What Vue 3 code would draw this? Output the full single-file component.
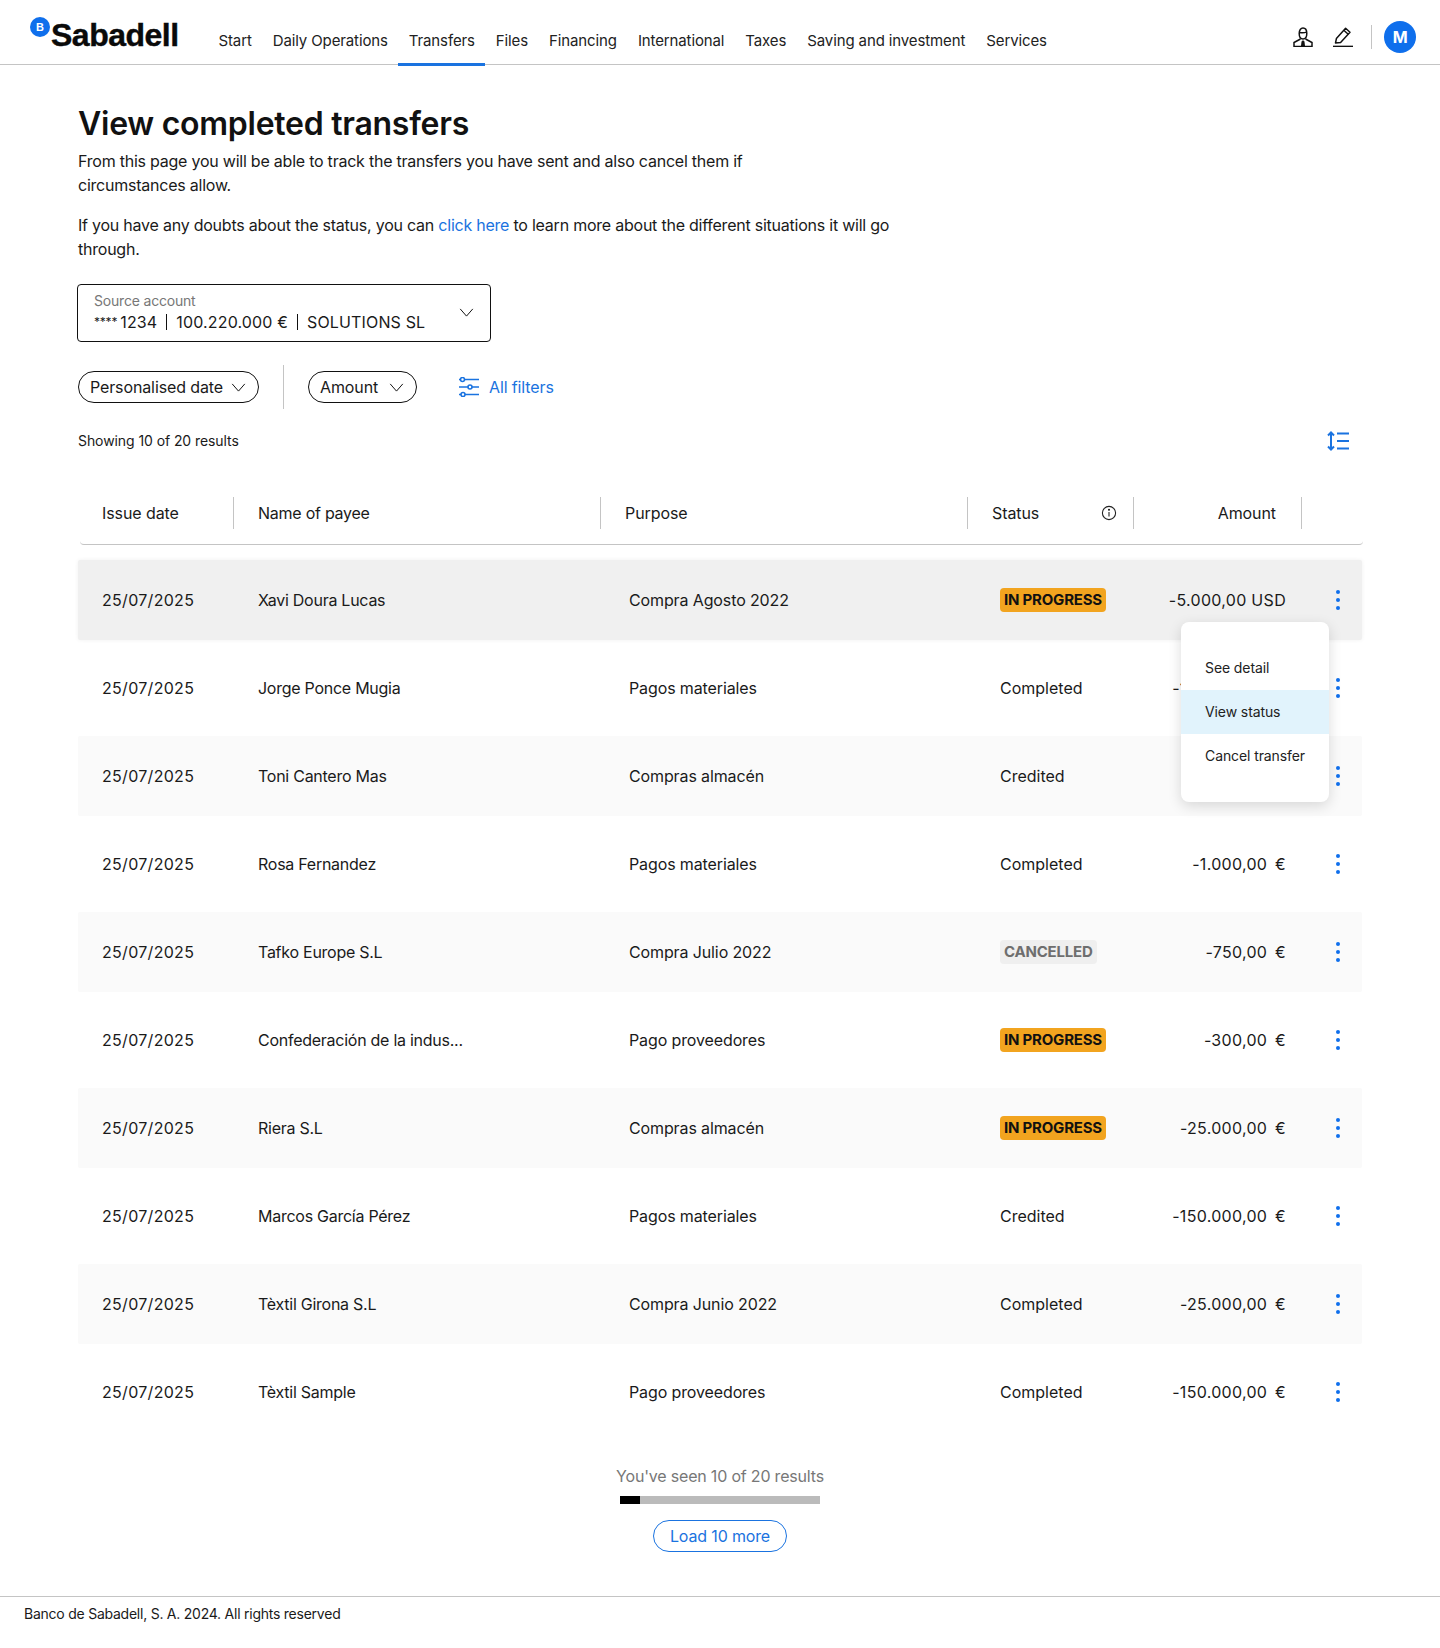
<script setup>
const nav = ['Start','Daily Operations','Transfers','Files','Financing','International','Taxes','Saving and investment','Services']
const rows = [
  { name:'Xavi Doura Lucas', purpose:'Compra Agosto 2022', status:'IN PROGRESS', amount:'-5.000,00 USD' },
  { name:'Jorge Ponce Mugia', purpose:'Pagos materiales', status:'Completed', amount:'-150.000,00 €' },
  { name:'Toni Cantero Mas', purpose:'Compras almacén', status:'Credited', amount:'-1.000,00 €' },
  { name:'Rosa Fernandez', purpose:'Pagos materiales', status:'Completed', amount:'-1.000,00 €' },
  { name:'Tafko Europe S.L', purpose:'Compra Julio 2022', status:'CANCELLED', amount:'-750,00 €' },
  { name:'Confederación de la indus...', purpose:'Pago proveedores', status:'IN PROGRESS', amount:'-300,00 €' },
  { name:'Riera S.L', purpose:'Compras almacén', status:'IN PROGRESS', amount:'-25.000,00 €' },
  { name:'Marcos García Pérez', purpose:'Pagos materiales', status:'Credited', amount:'-150.000,00 €' },
  { name:'Tèxtil Girona S.L', purpose:'Compra Junio 2022', status:'Completed', amount:'-25.000,00 €' },
  { name:'Tèxtil Sample', purpose:'Pago proveedores', status:'Completed', amount:'-150.000,00 €' },
]
</script>

<template>
  <div class="page">
    <header class="header">
      <div class="logo"><span class="logo-dot">B</span><span class="logo-word">Sabadell</span></div>
      <nav class="nav">
        <a v-for="n in nav" :key="n" class="nav-item" :class="{ active: n === 'Transfers' }">{{ n }}</a>
      </nav>
      <div class="tools">
        <svg class="tool" viewBox="0 0 20 20" fill="none" stroke="#111" stroke-width="1.5">
          <path d="M6.200 6.500C6.200 3.200 7.800 1 10 1s3.800 2.200 3.800 5.500S12.200 12 10 12 6.200 9.800 6.200 6.500Z"/>
          <path d="M6.400 5.500c2 .4 5.200.4 7.200-.4"/>
          <path d="M7.500 12 1 15.500V19.400h18v-3.900L12.500 12"/>
          <path d="M10 13.500v5.900M8.700 19.400l.6-5M11.300 19.400l-.6-5"/>
        </svg>
        <svg class="tool pen" viewBox="0 0 20 20" fill="none" stroke="#111" stroke-width="1.5" stroke-linejoin="round">
          <path d="M2.500 16 3.400 11.600 12.600 1.300 17 5.200 7.600 15.500Z"/>
          <path d="M10.800 3.300 15.200 7.200"/>
          <path d="M0 19.400h20"/>
        </svg>
        <span class="tool-div"></span>
        <span class="avatar">M</span>
      </div>
    </header>

    <main class="main">
      <h1 class="title">View completed transfers</h1>
      <p class="intro first">From this page you will be able to track the transfers you have sent and also cancel them if circumstances allow.</p>
      <p class="intro second">If you have any doubts about the status, you can <a class="link">click here</a> to learn more about the different situations it will go through.</p>

      <div class="select">
        <div class="select-text">
          <span class="select-label">Source account</span>
          <span class="select-value"><span class="stars">****</span> 1234 <i class="bar"></i> 100.220.000 € <i class="bar"></i> SOLUTIONS SL</span>
        </div>
        <svg class="chev big" viewBox="0 0 16 10" fill="none" stroke="#111" stroke-width="1.1"><path d="M1 1 8 9 15 1"/></svg>
      </div>

      <div class="filters">
        <button class="chip chip-date">Personalised date
          <svg class="chev" viewBox="0 0 16 10" fill="none" stroke="#111" stroke-width="1.1"><path d="M1 1 8 9 15 1"/></svg>
        </button>
        <span class="filter-div"></span>
        <button class="chip chip-amount">Amount
          <svg class="chev" viewBox="0 0 16 10" fill="none" stroke="#111" stroke-width="1.1"><path d="M1 1 8 9 15 1"/></svg>
        </button>
        <a class="all-filters">
          <svg class="filter-icon" viewBox="0 0 20 20" fill="none" stroke="#1a73e0" stroke-width="1.6">
            <path d="M5.500 2.500H20M0 2.500h1.500M13 10h7M0 10h9M6 17.500h14M0 17.500h2"/>
            <circle cx="3.500" cy="2.500" r="2"/><circle cx="11" cy="10" r="2"/><circle cx="4" cy="17.500" r="2"/>
          </svg>
          All filters
        </a>
      </div>

      <div class="results-row">
        <span class="results-text">Showing 10 of 20 results</span>
        <svg class="sort" viewBox="0 0 22 20" fill="none" stroke="#1a73e0" stroke-width="2">
          <path d="M4 2v16M1 4.500 4 1.500 7 4.500M1 15.500 4 18.500 7 15.500"/>
          <path d="M10 2.500h12M10 10h12M10 17.500h12"/>
        </svg>
      </div>

      <div class="thead">
        <div class="th c-date">Issue date</div>
        <div class="th c-name">Name of payee</div>
        <div class="th c-purpose">Purpose</div>
        <div class="th c-status">Status
          <svg class="info" viewBox="0 0 16 16" fill="none" stroke="#222" stroke-width="1.1">
            <circle cx="8" cy="8" r="6.600"/><path d="M8 7v4.500"/><circle cx="8" cy="4.800" r=".5" fill="#222"/>
          </svg>
        </div>
        <div class="th c-amount">Amount</div>
        <div class="th-end"></div>
      </div>

      <div class="tbody">
        <div v-for="(r, i) in rows" :key="i" class="row" :class="{ hot: i === 0, alt: i > 0 && i % 2 === 0 }">
          <div class="c-date cell">25/07/2025</div>
          <div class="c-name cell">{{ r.name }}</div>
          <div class="c-purpose cell purpose">{{ r.purpose }}</div>
          <div class="c-status cell status">
            <span v-if="r.status === 'IN PROGRESS'" class="badge warn">{{ r.status }}</span>
            <span v-else-if="r.status === 'CANCELLED'" class="badge off">{{ r.status }}</span>
            <template v-else>{{ r.status }}</template>
          </div>
          <div class="c-amount cell amount" :class="{ eur: r.amount.endsWith('€') }">{{ r.amount }}</div>
          <div class="kebab"><i></i><i></i><i></i></div>
        </div>
        <div class="menu">
          <div class="menu-item">See detail</div>
          <div class="menu-item on">View status</div>
          <div class="menu-item">Cancel transfer</div>
        </div>
      </div>

      <div class="more">
        <div class="seen">You've seen 10 of 20 results</div>
        <div class="progress"><div class="progress-fill" :style="{ width: '10%' }"></div></div>
        <button class="load">Load 10 more</button>
      </div>
    </main>

    <footer class="footer">Banco de Sabadell, S. A. 2024. All rights reserved</footer>
  </div>
</template>

<style>
html, body { margin: 0; background: #fff; }
</style>

<style scoped>
.page { width: 1440px; height: 1648px; font-family: Inter, "Liberation Sans", Arial, sans-serif; letter-spacing: -.19px; color: #1a1a1a; font-size: 16px; display: flex; flex-direction: column; background: #fff; }
.header { height: 65px; box-sizing: border-box; border-bottom: 1px solid #c4c4c4; display: flex; position: relative; padding-left: 30px; }
.logo { width: 178px; position: relative; display: flex; }
.logo-dot { position: absolute; left: 0; top: 17px; width: 20px; height: 20px; border-radius: 50%; background: #0f6fec; color: #fff; font-family: "Liberation Sans", sans-serif; font-size: 11px; font-weight: 700; display: flex; align-items: center; justify-content: center; z-index: 1; }
.logo-word { position: absolute; left: 21px; top: 17px; font-family: "Liberation Sans", sans-serif; font-size: 32px; line-height: 37px; font-weight: 700; letter-spacing: -.5px; color: #0a0a0a; -webkit-text-stroke: .4px #0a0a0a; }
.nav { display: flex; height: 64px; }
.nav-item { padding: 0 10.5px; font-size: 15px; line-height: 82px; height: 64px; position: relative; white-space: nowrap; color: #222; letter-spacing: -.12px; }
.nav-item.active::after { content: ""; position: absolute; left: 0; right: 0; bottom: -2px; height: 3px; background: #1a73e0; }
.tools { margin-left: auto; display: flex; align-items: flex-start; padding-right: 24px; }
.tool { width: 20px; height: 20px; margin-top: 27px; display: block; }
.tool.pen { margin-left: 20px; }
.tool-div { width: 1px; height: 24px; background: #c4c4c4; margin: 25px 0 0 18px; }
.avatar { width: 32px; height: 32px; margin: 21px 0 0 12px; border-radius: 50%; background: #0f6fec; color: #fff; font-weight: 700; font-size: 16px; display: flex; align-items: center; justify-content: center; }
.main { flex: 1; padding: 40px 78px 0; position: relative; }
.title { margin: 0; font-size: 32px; line-height: 38px; font-weight: 600; color: #111; letter-spacing: -.26px; }
.intro { margin: 0; width: 820px; line-height: 24px; letter-spacing: -.23px; }
.first { width: 680px; margin-top: 6px; }
.second { margin-top: 16px; width: 830px; }
.link { color: #1a73e0; }
.select { width: 414px; height: 58px; box-sizing: border-box; margin: 23px 0 0 -1px; border: 1px solid #111; border-radius: 4px; display: flex; align-items: center; justify-content: space-between; padding: 0 16px; }
.select-text { display: flex; flex-direction: column; }
.select-label { font-size: 14px; line-height: 18px; color: #777; }
.select-value { line-height: 24px; display: flex; align-items: center; gap: 8px; white-space: nowrap; letter-spacing: .15px; }
.stars { font-size: 12px; margin-right: -5px; letter-spacing: -.2px; }
.bar { width: 1px; height: 16px; background: #111; margin: 0 1px; }
.chev { width: 15px; height: 9px; flex: none; }
.chev.big { margin-top: -2px; }
.filters { display: flex; align-items: center; margin-top: 23px; height: 44px; }
.chip { height: 32px; box-sizing: border-box; border: 1px solid #111; border-radius: 16px; background: #fff; font: inherit; letter-spacing: -.12px; color: #1a1a1a; display: flex; align-items: center; justify-content: space-between; padding: 0 12px 0 11px; }
.chip-date { width: 181px; }
.filter-div { width: 1px; height: 44px; background: #c4c4c4; margin: 0 24px; }
.chip-amount { width: 109px; }
.all-filters { display: flex; align-items: center; gap: 10px; color: #1a73e0; margin-left: 42px; letter-spacing: -.12px; }
.filter-icon { width: 20px; height: 20px; }
.results-row { display: flex; justify-content: space-between; align-items: center; margin-top: 20px; height: 24px; font-size: 14px; padding-right: 13px; letter-spacing: -.08px; }
.results-text { margin-top: -2px; }
.sort { width: 22px; height: 20px; }
.thead { display: flex; align-items: center; margin: 44px 0 0 2px; width: 1283px; padding-bottom: 15px; height: 32px; border-bottom: 1px solid #c4c4c4; border-bottom-right-radius: 4px; border-bottom-left-radius: 4px; letter-spacing: -.08px; }
.th { height: 32px; line-height: 32px; box-sizing: border-box; border-right: 1px solid #c4c4c4; }
.thead .c-date { width: 154px; padding-left: 22px; box-sizing: border-box; flex: none; }
.thead .c-name { width: 367px; padding-left: 24px; box-sizing: border-box; flex: none; letter-spacing: -.25px; }
.thead .c-purpose { width: 367px; padding-left: 24px; box-sizing: border-box; flex: none; }
.thead .c-status { width: 166px; padding: 0 16px 0 24px; box-sizing: border-box; flex: none; display: flex; align-items: center; justify-content: space-between; }
.thead .c-amount { width: 168px; padding-right: 25px; text-align: right; box-sizing: border-box; flex: none; }
.th-end { flex: 1; }
.info { width: 16px; height: 16px; }
.tbody { margin-top: 15px; position: relative; display: flex; flex-direction: column; gap: 8px; }
.row { height: 80px; display: flex; align-items: center; border-radius: 2px; width: 1284px; }
.row.hot { background: #f0f0f0; box-shadow: 0 0 4px #f0f0f0; }
.row.alt { background: #fafafa; }
.cell { box-sizing: border-box; flex: none; }
.row .c-date { width: 155px; padding-left: 24px; letter-spacing: .3px; }
.row .c-name { width: 367px; padding-left: 25px; white-space: nowrap; letter-spacing: -.26px; }
.row .purpose { width: 371px; padding-left: 29px; letter-spacing: -.12px; }
.row .status { width: 185px; padding-left: 29px; display: flex; letter-spacing: 0; }
.row .amount { width: 130px; white-space: nowrap; display: flex; justify-content: flex-end; letter-spacing: .3px; }
.row .amount.eur { word-spacing: 3px; }
.badge { height: 24px; line-height: 24px; padding: 0 4px; border-radius: 4px; font-weight: 700; font-size: 15px; letter-spacing: -.2px; white-space: nowrap; }
.warn { background: #f2a41f; color: #111; }
.off { background: #efefef; color: #6e6e6e; }
.kebab { margin-left: 50px; width: 4px; display: flex; flex-direction: column; gap: 4px; }
.kebab i { width: 4px; height: 4px; border-radius: 50%; background: #0f6fec; display: block; }
.menu { position: absolute; left: 1103px; top: 62px; width: 148px; height: 180px; box-sizing: border-box; padding: 24px 0; background: #fff; border-radius: 8px; box-shadow: 0 4px 14px rgba(0,0,0,.14); font-size: 14px; letter-spacing: -.1px; }
.menu-item { height: 44px; line-height: 44px; padding-left: 24px; color: #222; white-space: nowrap; }
.menu-item.on { background: #e1f3fc; }
.more { display: flex; flex-direction: column; align-items: center; margin-top: 32px; }
.seen { line-height: 24px; color: #777; }
.progress { width: 200px; height: 8px; background: #bbb; margin-top: 8px; }
.progress-fill { height: 8px; background: #000; }
.load { width: 134px; height: 32px; margin-top: 16px; box-sizing: border-box; border: 1px solid #1a73e0; border-radius: 16px; background: #fff; color: #1a73e0; font: inherit; letter-spacing: -.15px; padding: 0; }
.footer { height: 52px; box-sizing: border-box; border-top: 1px solid #c4c4c4; padding: 7px 0 0 24px; font-size: 14px; line-height: 20px; letter-spacing: -.24px; }
</style>
